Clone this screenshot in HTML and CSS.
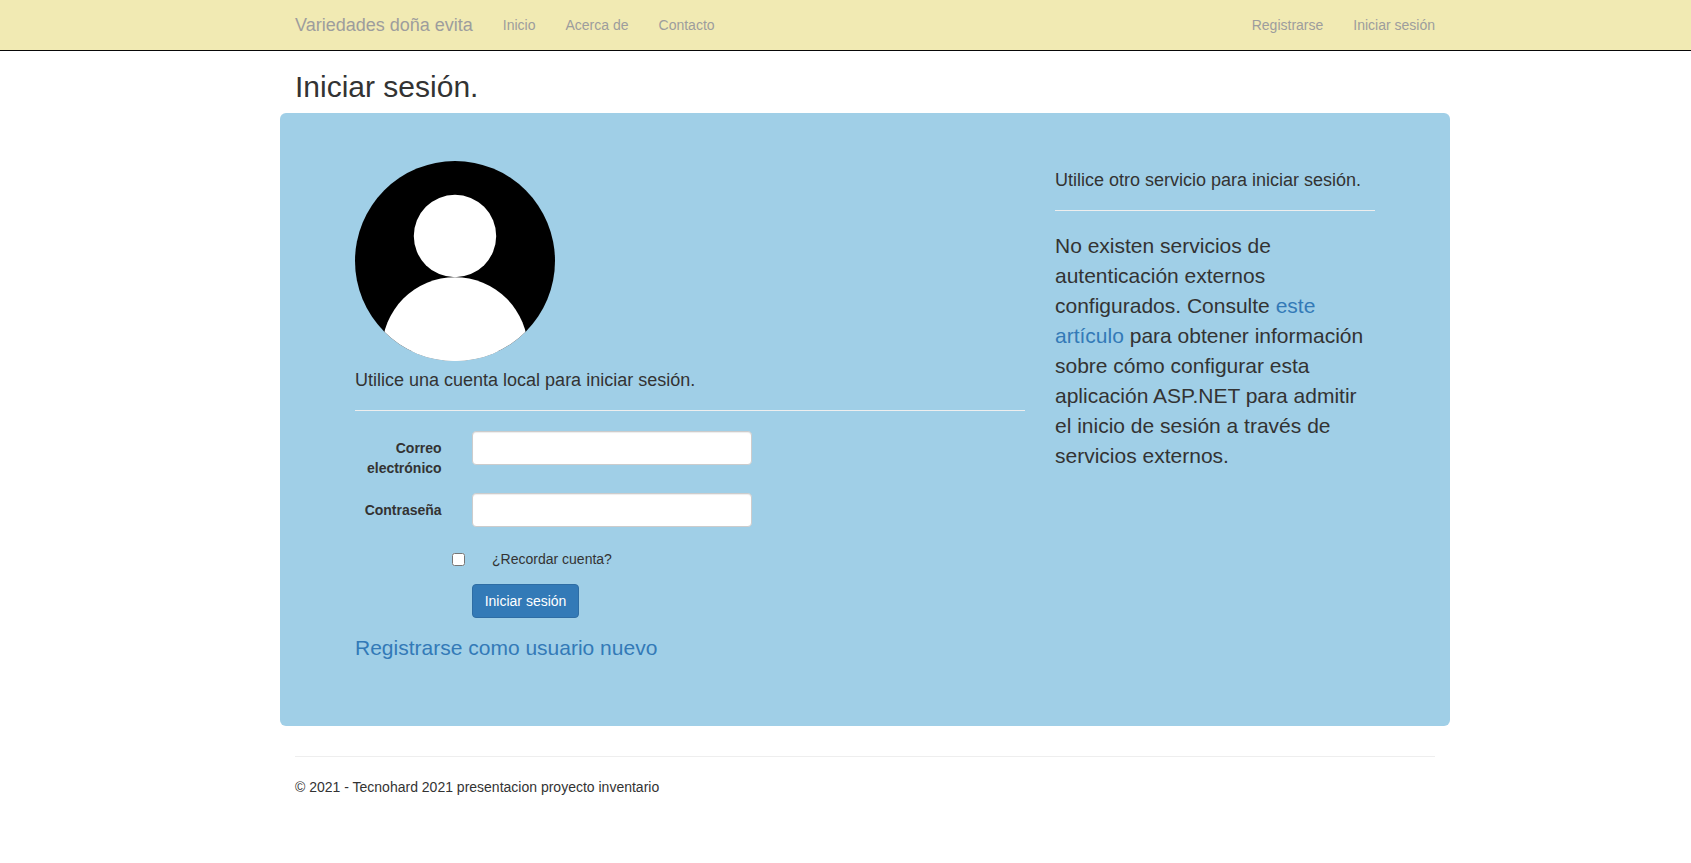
FILE: index.html
```html
<!DOCTYPE html>
<html lang="es">
<head>
<meta charset="utf-8">
<title>Iniciar sesión</title>
<link rel="stylesheet" href="styles.css">
</head>
<body>
<header class="navbar">
  <nav class="container navbar-inner">
    <a class="brand" href="#">Variedades doña evita</a>
    <a class="nav-link" href="#">Inicio</a>
    <a class="nav-link" href="#">Acerca de</a>
    <a class="nav-link" href="#">Contacto</a>
    <a class="nav-link nav-right" href="#">Registrarse</a>
    <a class="nav-link" href="#">Iniciar sesión</a>
  </nav>
</header>
<div class="container">
  <h2 class="title">Iniciar sesión.</h2>
  <main class="panel">
    <section class="local">
      <svg class="avatar" viewBox="0 0 200 200" width="200" height="200">
        <rect width="200" height="200" fill="#000"/>
        <circle cx="100" cy="75" r="41.2" fill="#fff"/>
        <circle cx="100" cy="189.2" r="73" fill="#fff"/>
        <rect x="40" y="190" width="120" height="10" fill="#fff"/>
      </svg>
      <h4 class="subtitle">Utilice una cuenta local para iniciar sesión.</h4>
      <hr class="rule">
      <form>
        <div class="group">
          <label class="label" for="email">Correo electrónico</label>
          <input class="field" id="email" type="text">
        </div>
        <div class="group">
          <label class="label" for="password">Contraseña</label>
          <input class="field" id="password" type="password">
        </div>
        <div class="remember">
          <input class="check" id="remember" type="checkbox">
          <label for="remember">¿Recordar cuenta?</label>
        </div>
        <div class="actions"><button class="button" type="button">Iniciar sesión</button></div>
      </form>
      <p class="lead"><a class="link" href="#">Registrarse como usuario nuevo</a></p>
    </section>
    <section class="external">
      <h4 class="subtitle">Utilice otro servicio para iniciar sesión.</h4>
      <hr class="rule">
      <p class="lead">No existen servicios de autenticación externos configurados. Consulte <a class="link" href="#">este artículo</a> para obtener información sobre cómo configurar esta aplicación ASP.NET para admitir el inicio de sesión a través de servicios externos.</p>
    </section>
  </main>
  <hr class="rule footer-rule">
  <footer class="footer">© 2021 - Tecnohard 2021 presentacion proyecto inventario</footer>
</div>
</body>
</html>
```
FILE: styles.css
```css
* { box-sizing: border-box; }

body {
  margin: 0;
  background: #fff;
  color: #333;
  font: 14px/20px "Liberation Sans", Arial, sans-serif;
}

.container {
  width: 1170px;
  margin-left: 280px;
  padding: 0 15px;
}

.navbar {
  height: 51px;
  background: #f1eab3;
  border-bottom: 1px solid #080808;
}

.navbar-inner {
  display: flex;
  gap: 30px;
  padding-top: 15px;
}

.brand,
.nav-link {
  color: #9d9d9d;
  text-decoration: none;
  white-space: nowrap;
}

.brand { font-size: 18px; }
.nav-right { margin-left: auto; }

.title {
  margin: 19px 0 10px;
  font-size: 30px;
  font-weight: 500;
  line-height: 33px;
}

.panel {
  display: flex;
  height: 613px;
  margin: 0 -15px 30px;
  padding: 48px 60px;
  background: #a0cfe7;
  border-radius: 6px;
}

.local {
  width: 700px;
  padding: 0 15px;
}

.external {
  width: 350px;
  padding: 0 15px;
}

.avatar {
  display: block;
  border-radius: 50%;
  overflow: hidden;
}

.subtitle {
  margin: 10px 0;
  font-size: 18px;
  font-weight: 500;
  line-height: 19px;
}

.rule {
  margin: 20px 0;
  border: 0;
  border-top: 1px solid #eee;
}

.group {
  display: flex;
  align-items: flex-start;
  gap: 30px;
  margin-bottom: 15px;
}

.label {
  width: 86.67px;
  padding-top: 7px;
  text-align: right;
  font-weight: 700;
}

.field {
  width: 280px;
  height: 34px;
  padding: 6px 12px;
  background: #fff;
  border: 1px solid #ccc;
  border-radius: 4px;
  box-shadow: inset 0 1px 1px rgba(0, 0, 0, .075);
  font: inherit;
}

.remember {
  display: flex;
  gap: 27.4px;
  margin: 0 0 15px 96.67px;
  padding-top: 7px;
}

.check {
  width: 13px;
  height: 13px;
  margin: 4px 0 0;
}

.actions {
  padding-left: 116.67px;
  margin-bottom: 15px;
}

.button {
  display: block;
  height: 34px;
  padding: 6px 12px;
  background: #337ab7;
  border: 1px solid #2e6da4;
  border-radius: 4px;
  color: #fff;
  font: inherit;
}

.lead {
  margin: 0 0 15px;
  font-size: 21px;
  line-height: 30px;
}

.link {
  color: #337ab7;
  text-decoration: none;
}

.footer-rule { margin-top: 30px; }
```
